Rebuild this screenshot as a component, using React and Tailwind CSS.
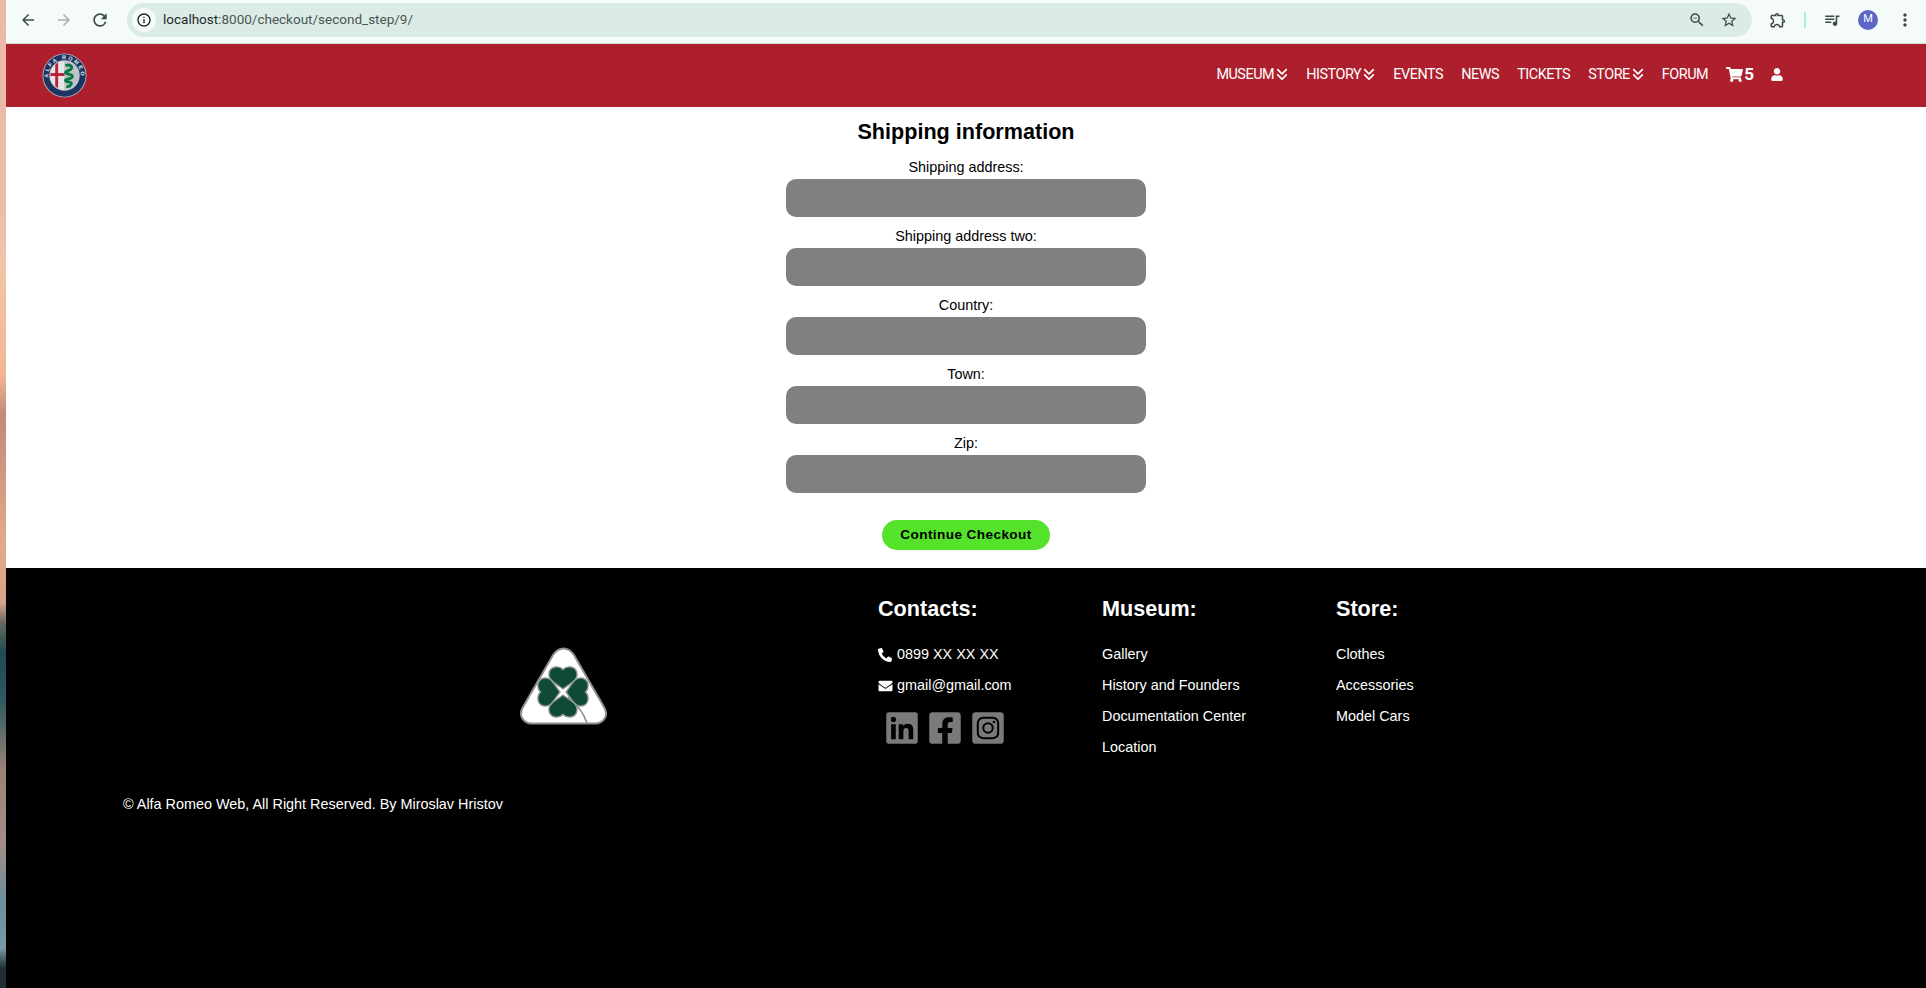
import React from 'react';
import { FaPhoneAlt, FaEnvelope, FaLinkedin, FaFacebookSquare, FaInstagramSquare, FaShoppingCart, FaUser } from 'react-icons/fa';
import { FaAnglesDown } from 'react-icons/fa6';
import { MdArrowBack, MdArrowForward, MdRefresh, MdInfoOutline, MdZoomOut, MdStarBorder, MdOutlineExtension, MdQueueMusic, MdMoreVert } from 'react-icons/md';

const FIELDS = ['Shipping address:', 'Shipping address two:', 'Country:', 'Town:', 'Zip:'];

const NAV_ITEMS = [
  { label: 'MUSEUM', arrow: true },
  { label: 'HISTORY', arrow: true },
  { label: 'EVENTS' },
  { label: 'NEWS' },
  { label: 'TICKETS' },
  { label: 'STORE', arrow: true },
  { label: 'FORUM' },
];

const MUSEUM_LINKS = ['Gallery', 'History and Founders', 'Documentation Center', 'Location'];
const STORE_LINKS = ['Clothes', 'Accessories', 'Model Cars'];

function BrowserBar() {
  return (
    <div className="h-11 pb-1 bg-[#f4fbf9] border-b border-[#d5dedb] flex items-center text-[#3c4a47]">
      <MdArrowBack className="w-[18px] h-[18px] ml-[13px]" />
      <MdArrowForward className="w-[18px] h-[18px] ml-[18px] text-[#a9b0ae]" />
      <MdRefresh className="w-5 h-5 ml-[17px]" />
      <div className="ml-[17px] h-[34px] w-[1625px] rounded-full bg-[#dbece7] flex items-center pl-[5px] pr-[14px]">
        <div className="w-6 h-6 rounded-full bg-[#f4fbf9] flex items-center justify-center">
          <MdInfoOutline className="w-4 h-4 text-[#1f2322]" />
        </div>
        <span className="ml-[7px] text-[13.5px] font-['Roboto',sans-serif] text-[#1f2a28]">
          localhost<span className="text-[#4a5552]">:8000/checkout/second_step/9/</span>
        </span>
        <MdZoomOut className="w-[18px] h-[18px] ml-auto" />
        <MdStarBorder className="w-[18px] h-[18px] ml-[14px]" />
      </div>
      <MdOutlineExtension className="w-[18px] h-[18px] ml-[17px]" />
      <div className="w-[2px] h-4 bg-[#a6f0e4] ml-[17px]" />
      <MdQueueMusic className="w-[18px] h-[18px] ml-[17px]" />
      <div className="w-5 h-5 rounded-full bg-[#5b67c4] text-white text-[11px] font-['Roboto',sans-serif] flex items-center justify-center ml-[17px]">M</div>
      <MdMoreVert className="w-5 h-5 ml-[17px]" />
    </div>
  );
}

function AlfaLogo() {
  return (
    <svg viewBox="0 0 46 46" className="w-[45px] h-[45px]">
      <defs>
        <clipPath id="inner"><circle cx="23" cy="23" r="14.5" /></clipPath>
      </defs>
      <circle cx="23" cy="23" r="22.5" fill="#aeb7c4" />
      <circle cx="23" cy="23" r="21.6" fill="#1c3560" />
      <circle cx="23" cy="23" r="15.5" fill="#c9ccd0" />
      <g clipPath="url(#inner)">
        <rect x="8" y="8" width="15" height="30" fill="#e6e6e6" />
        <rect x="23" y="8" width="15" height="30" fill="#bfc2c6" />
        <rect x="13.5" y="8" width="3" height="30" fill="#b5223a" />
        <rect x="8" y="20.5" width="15" height="3" fill="#b5223a" />
      </g>
      <path d="M24 13c5-2 7 1 6 3s-6 2-6 4 7 1 7 4-7 2-7 4 6 1 6 3-2 4-5 3" fill="none" stroke="#0a7a43" strokeWidth="3" />
      <path id="ringText" d="M8.7 31.25a16.5 16.5 0 1 1 28.6 0" fill="none" />
      <text fontSize="5.6" fontWeight="700" fill="#e8ecf2" fontFamily="'Liberation Sans',sans-serif" letterSpacing="1.9" textAnchor="middle">
        <textPath href="#ringText" startOffset="50%">ALFA ROMEO</textPath>
      </text>
    </svg>
  );
}

function CloverLeaf({ angle }) {
  return (
    <path
      transform={`rotate(${angle} 43 45)`}
      d="M43 42 C39 39 34 36 31 33 C27 28 29 21 35 20 C38 19.5 41 20.5 43 22.5 C45 20.5 48 19.5 51 20 C57 21 59 28 55 33 C52 36 47 39 43 42 Z"
      fill="#0f4a36"
      stroke="#9a9a9a"
      strokeWidth="1.4"
    />
  );
}

function CloverLogo() {
  return (
    <svg viewBox="0 0 87 78" className="w-[87px] h-[78px]">
      <path d="M43.5 1.5 C48 1.5 51 3.5 54 8 L84 60 C89 68 84 76.5 75 76.5 L12 76.5 C3 76.5 -2 68 3 60 L33 8 C36 3.5 39 1.5 43.5 1.5 Z" fill="#fff" stroke="#8f8f8f" strokeWidth="2" />
      <CloverLeaf angle={0} />
      <CloverLeaf angle={90} />
      <CloverLeaf angle={180} />
      <CloverLeaf angle={270} />
      <path d="M48 50c8 7 15 14 19 26" fill="none" stroke="#8f8f8f" strokeWidth="1.6" />
    </svg>
  );
}

export default function App() {
  return (
    <div className="h-[988px] overflow-hidden flex bg-black font-['Liberation_Sans',Arial,sans-serif]">
      <div className="w-[6px] shrink-0 bg-[linear-gradient(to_bottom,#ecb8aa_0%,#e8bca9_20%,#f2c4a8_27%,#f3b693_38%,#c08a78_42%,#e3a98b_55%,#d7a389_61%,#6a6a60_63%,#1f4a50_66%,#2f5a60_71%,#9c8377_78%,#a58c84_85%,#6f8e9b_91%,#7a98a3_96%,#1e2d36_98%)]" />
      <div className="flex-1 min-w-0 flex flex-col">
        <BrowserBar />

        <nav className="h-[63px] bg-[#ae1f2e] flex items-center text-white font-['Roboto',sans-serif] text-[14.4px] tracking-[-0.45px]">
          <div className="ml-9"><AlfaLogo /></div>
          <div className="ml-auto mr-[143px] pb-[2px] flex items-center">
            {NAV_ITEMS.map(({ label, arrow }) => (
              <a key={label} className="flex items-center mr-[18px]">
                {label}
                {arrow && <FaAnglesDown className="w-3 h-[14px] ml-[2px]" />}
              </a>
            ))}
            <FaShoppingCart className="w-[17px] h-[15px]" />
            <span className="text-[17px] font-bold ml-[1px] tracking-normal">5</span>
            <FaUser className="w-[12px] h-[13px] ml-[17px]" />
          </div>
        </nav>

        <main className="bg-white h-[461px] flex flex-col items-center text-black">
          <h1 className="text-[21.6px] font-bold leading-[25px] mt-[12px] mb-[15px]">Shipping information</h1>
          {FIELDS.map((label) => (
            <div key={label} className="flex flex-col items-center mb-[11px]">
              <label className="text-[14.4px] leading-4 mb-1">{label}</label>
              <input className="w-[360px] h-[38px] rounded-[10px] bg-[#808080] outline-none" />
            </div>
          ))}
          <button className="mt-4 h-[30px] w-[168px] rounded-full bg-[#54e32a] text-black text-[13.6px] font-bold tracking-[0.4px]">
            Continue Checkout
          </button>
        </main>

        <footer className="flex-1 bg-black text-white text-[14.4px]">
          <div className="flex h-[218px]">
            <div className="w-[872px] shrink-0 pt-[79px] pl-[514px]">
              <CloverLogo />
            </div>
            <div className="w-[224px] shrink-0 pt-7">
              <h3 className="text-[21.6px] font-bold leading-[25px] mb-[26px]">Contacts:</h3>
              <p className="flex items-center h-4 mb-[15px]"><FaPhoneAlt className="w-[14px] h-[14px] mr-[5px]" />0899 XX XX XX</p>
              <p className="flex items-center h-4"><FaEnvelope className="w-[15px] h-[14px] mr-1" />gmail@gmail.com</p>
              <div className="flex items-center gap-[11px] ml-2 mt-4 text-[#7a7a7a]">
                <FaLinkedin className="w-8 h-9" />
                <FaFacebookSquare className="w-8 h-9" />
                <FaInstagramSquare className="w-8 h-9" />
              </div>
            </div>
            <div className="w-[234px] shrink-0 pt-7">
              <h3 className="text-[21.6px] font-bold leading-[25px] mb-[25px]">Museum:</h3>
              {MUSEUM_LINKS.map((l) => <p key={l} className="leading-4 mb-[15px]">{l}</p>)}
            </div>
            <div className="pt-7">
              <h3 className="text-[21.6px] font-bold leading-[25px] mb-[25px]">Store:</h3>
              {STORE_LINKS.map((l) => <p key={l} className="leading-4 mb-[15px]">{l}</p>)}
            </div>
          </div>
          <p className="ml-[117px] mt-[10px] leading-4">© Alfa Romeo Web, All Right Reserved. By Miroslav Hristov</p>
        </footer>
      </div>
    </div>
  );
}
